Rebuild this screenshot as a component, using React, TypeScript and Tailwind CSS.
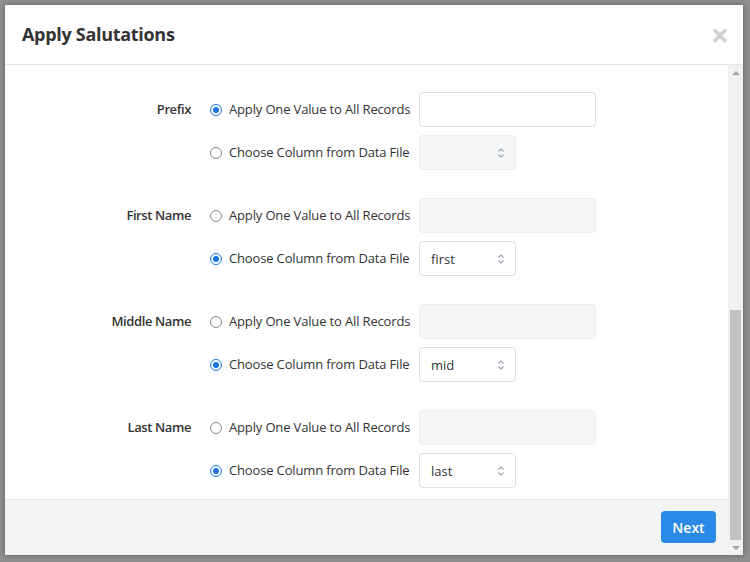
import React from "react";

type Field = {
  label: string;
  mode: "value" | "column";
  column: string;
};

const fields: Field[] = [
  { label: "Prefix", mode: "value", column: "" },
  { label: "First Name", mode: "column", column: "first" },
  { label: "Middle Name", mode: "column", column: "mid" },
  { label: "Last Name", mode: "column", column: "last" },
];

function Radio({ checked }: { checked: boolean }) {
  return checked ? (
    <span className="flex h-[12px] w-[12px] shrink-0 items-center justify-center rounded-full border-[1.5px] border-[#1a73e8] bg-white">
      <span className="h-[6px] w-[6px] rounded-full bg-[#1a73e8]" />
    </span>
  ) : (
    <span className="h-[12px] w-[12px] shrink-0 rounded-full border border-[#8a8a8a] bg-white" />
  );
}

function Chevrons() {
  return (
    <svg width="8" height="12" viewBox="0 0 8 12" fill="none" stroke="#9ca3af" strokeWidth="1.1">
      <path d="M1.5 4.5 L4 2 L6.5 4.5" />
      <path d="M1.5 7.5 L4 10 L6.5 7.5" />
    </svg>
  );
}

function FieldGroup({ field }: { field: Field }) {
  const isValue = field.mode === "value";
  return (
    <div className="grid grid-cols-[186px_190px_auto] grid-rows-[35px_35px] gap-x-[19px] gap-y-[8px]">
      <div className="flex items-center justify-end text-[13px] font-semibold tracking-[-0.4px] text-[#333]">
        {field.label}
      </div>
      <div className="flex items-center gap-[7px]">
        <Radio checked={isValue} />
        <span className="whitespace-nowrap text-[13px] tracking-[-0.15px] text-[#333]">
          Apply One Value to All Records
        </span>
      </div>
      <div
        className={`h-[35px] w-[177px] rounded-[4px] border ${
          isValue ? "border-[#dcdfe3] bg-white" : "border-[#eceef1] bg-[#f5f6f7]"
        }`}
      />
      <div />
      <div className="flex items-center gap-[7px]">
        <Radio checked={!isValue} />
        <span className="whitespace-nowrap text-[13px] tracking-[-0.15px] text-[#333]">
          Choose Column from Data File
        </span>
      </div>
      <div
        className={`flex h-[35px] w-[97px] items-center justify-between rounded-[4px] border pl-[11px] pr-[10px] ${
          isValue ? "border-[#eceef1] bg-[#f5f6f7]" : "border-[#dcdfe3] bg-white"
        }`}
      >
        <span className="pt-[2px] text-[13px] text-[#333]">{field.column}</span>
        <Chevrons />
      </div>
    </div>
  );
}

function Scrollbar() {
  return (
    <div className="flex w-[15px] flex-col items-center bg-[#f1f1f1]">
      <div className="flex h-[15px] w-full items-center justify-center">
        <span className="h-0 w-0 border-x-[4px] border-b-[4px] border-x-transparent border-b-[#a3a3a3]" />
      </div>
      <div className="flex w-full flex-1 flex-col justify-end px-[2px]">
        <div className="h-[230px] w-full bg-[#c1c1c1]" />
      </div>
      <div className="flex h-[15px] w-full items-center justify-center">
        <span className="h-0 w-0 border-x-[4px] border-t-[4px] border-x-transparent border-t-[#a3a3a3]" />
      </div>
    </div>
  );
}

export default function App() {
  return (
    <div className="h-[562px] w-[750px] overflow-hidden bg-[#8e8e8e] pl-[5px] pt-[5px] font-['Open_Sans',sans-serif]">
      <div className="flex h-[550px] w-[738px] flex-col bg-white shadow-[0_0_5px_rgba(0,0,0,0.35)]">
        {/* Header */}
        <div className="flex h-[60px] shrink-0 items-center justify-between border-b border-[#e5e5e5] pl-[17px] pr-[14px]">
          <h2 className="text-[18px] font-bold tracking-[-0.3px] text-[#333]">Apply Salutations</h2>
          <span className="text-[32px] font-bold leading-none text-[#d0d0d0]">×</span>
        </div>

        <div className="flex min-h-0 flex-1">
          <div className="flex flex-1 flex-col">
            {/* Body */}
            <div className="flex flex-1 flex-col gap-[28px] pt-[27px]">
              {fields.map((f) => (
                <FieldGroup key={f.label} field={f} />
              ))}
            </div>

            {/* Footer */}
            <div className="flex h-[56px] shrink-0 justify-end border-t border-[#e5e7eb] bg-[#f3f4f6] pr-[12px] pt-[11px]">
              <button className="h-[32px] w-[55px] rounded-[4px] bg-[#2b8ae6] text-[14px] font-semibold text-white">
                Next
              </button>
            </div>
          </div>
          <Scrollbar />
        </div>
      </div>
    </div>
  );
}
